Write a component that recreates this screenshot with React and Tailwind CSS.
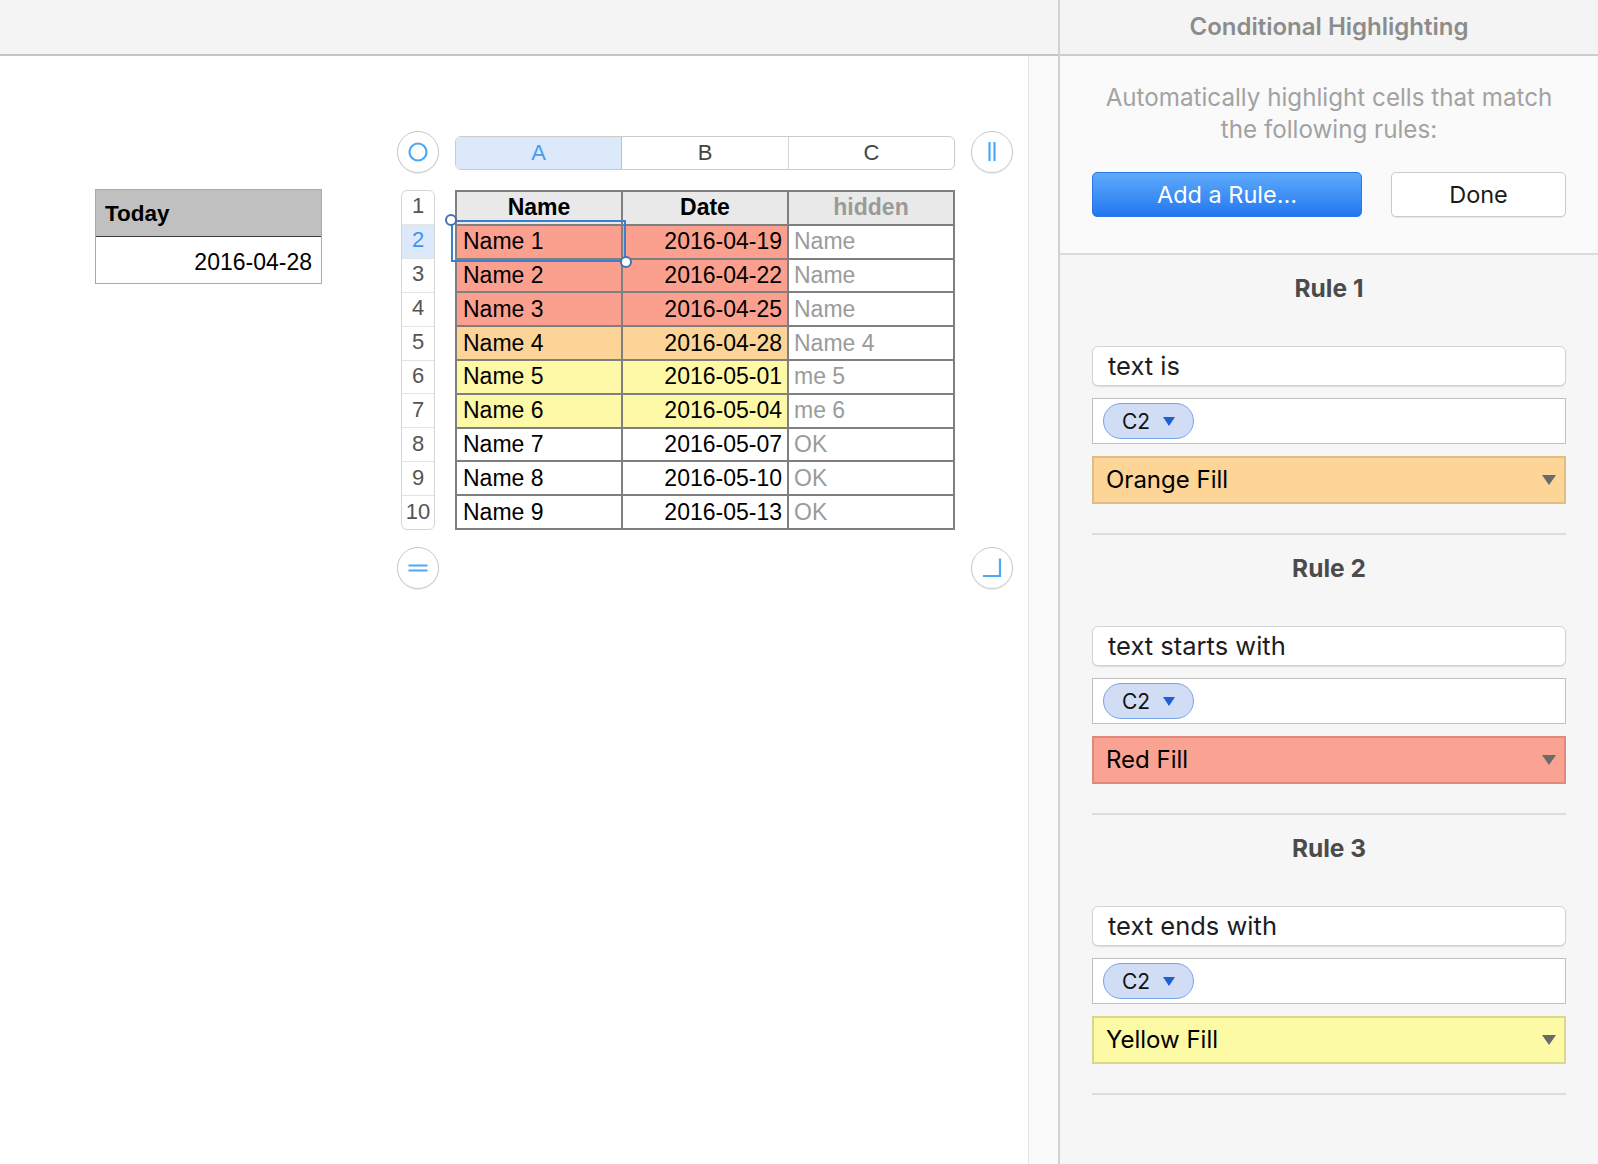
import React from 'react';

/* ---------- data ---------- */
const FILL = { red: 'bg-[#fba08e]', orange: 'bg-[#fcd497]', yellow: 'bg-[#fdf9a6]' };

const ROWS = [
  ['Name 1', '2016-04-19', 'Name', 'red'],
  ['Name 2', '2016-04-22', 'Name', 'red'],
  ['Name 3', '2016-04-25', 'Name', 'red'],
  ['Name 4', '2016-04-28', 'Name 4', 'orange'],
  ['Name 5', '2016-05-01', 'me 5', 'yellow'],
  ['Name 6', '2016-05-04', 'me 6', 'yellow'],
  ['Name 7', '2016-05-07', 'OK', null],
  ['Name 8', '2016-05-10', 'OK', null],
  ['Name 9', '2016-05-13', 'OK', null],
];

const RULES = [
  { title: 'Rule 1', cond: 'text is', fill: 'Orange Fill', cls: 'bg-[#fcd597] border-[#dfbd84]' },
  { title: 'Rule 2', cond: 'text starts with', fill: 'Red Fill', cls: 'bg-[#fba393] border-[#e0887a]' },
  { title: 'Rule 3', cond: 'text ends with', fill: 'Yellow Fill', cls: 'bg-[#fdfaa6] border-[#dcd68a]' },
];

/* ---------- small pieces ---------- */
const CircleBtn = ({ children }) => (
  <div className="w-[42px] h-[42px] rounded-full bg-white border-[1.5px] border-[#cacaca] shadow-[0_1px_1px_rgba(0,0,0,0.08)] flex items-center justify-center">
    <svg width="24" height="24" viewBox="0 0 24 24" fill="none" stroke="#4ea8f6" strokeWidth="2.2">
      {children}
    </svg>
  </div>
);

const SheetTable = () => (
  <div className="relative w-[500px] h-[340px]">
    <div className="w-full h-full grid grid-cols-3 grid-rows-[repeat(10,1fr)] gap-[2px] p-[2px] bg-[#7f7f7f] text-[23px] leading-none">
      <div className="bg-[#e9e9e9] flex items-center justify-center font-bold text-black">Name</div>
      <div className="bg-[#e9e9e9] flex items-center justify-center font-bold text-black">Date</div>
      <div className="bg-[#e9e9e9] flex items-center justify-center font-bold text-[#9a9a9a]">hidden</div>
      {ROWS.map(([name, date, hidden, fill]) => (
        <React.Fragment key={name}>
          <div className={`${fill ? FILL[fill] : 'bg-white'} flex items-center pl-[6px] text-black`}>{name}</div>
          <div className={`${fill ? FILL[fill] : 'bg-white'} flex items-center justify-end pr-[5px] text-black`}>{date}</div>
          <div className="bg-white flex items-center pl-[5px] text-[#9b9b9b]">{hidden}</div>
        </React.Fragment>
      ))}
    </div>
    {/* selection on A2 */}
    <div className="absolute left-[-4px] top-[30px] w-[175px] h-[42px] border-2 border-[#3a7fd0]" />
    <div className="absolute left-[-10px] top-[24px] w-[12px] h-[12px] rounded-full bg-white border-2 border-[#4571b0]" />
    <div className="absolute left-[165px] top-[66px] w-[12px] h-[12px] rounded-full bg-white border-2 border-[#4571b0]" />
  </div>
);

const RowNumbers = () => (
  <div className="mx-auto w-[34px] h-[340px] rounded-[6px] border border-[#d6d6d6] bg-white overflow-hidden flex flex-col">
    {Array.from({ length: 10 }, (_, i) => i + 1).map((n) => (
      <div
        key={n}
        className={`flex-1 flex items-center justify-center pb-[2px] text-[22px] leading-none border-b border-[#e4e4e4] last:border-b-0 ${n === 2 ? 'bg-[#dce9fb] text-[#3d95ee]' : 'text-[#555]'}`}
      >
        {n}
      </div>
    ))}
  </div>
);

const RuleBlock = ({ rule }) => (
  <div className="pt-[18px] pb-[29px] border-b-2 border-[#dddddd]">
    <div className="h-[30px] flex items-center justify-center text-[24.5px] font-bold text-[#4b4b4b]">{rule.title}</div>
    <div className="mt-[43px] h-[40px] rounded-[6px] bg-white border border-[#d3d3d3] shadow-[0_1px_1px_rgba(0,0,0,0.12)] flex items-center pl-[15px] text-[25.5px] text-[#1d1d1d]">
      {rule.cond}
    </div>
    <div className="mt-3 h-[46px] bg-white border border-[#bfbfbf] flex items-center pl-[10px]">
      <div className="h-[36px] w-[91px] rounded-full bg-[#d0ddf5] border-[1.5px] border-[#7aa4ea] flex items-center pl-[18px] gap-[13px]">
        <span className="text-[21px] text-[#111] leading-none">C2</span>
        <svg width="12" height="9" viewBox="0 0 12 9"><path d="M0 0 H12 L6 9 Z" fill="#1f5fd4" /></svg>
      </div>
    </div>
    <div className={`mt-3 h-[48px] border-2 ${rule.cls} flex items-center justify-between pl-[12px] pr-[8px]`}>
      <span className="text-[24px] text-black">{rule.fill}</span>
      <svg width="14" height="10" viewBox="0 0 14 10"><path d="M0 0 H14 L7 10 Z" fill="#6a6a6a" /></svg>
    </div>
  </div>
);

/* ---------- page ---------- */
export default function App() {
  return (
    <div className="w-[1598px] h-[1164px] flex overflow-hidden bg-white font-['Liberation_Sans',Arial,sans-serif]">
      {/* left: sheet canvas */}
      <div className="w-[1058px] h-full flex flex-col">
        <div className="h-[56px] bg-[#f4f4f4] border-b-2 border-[#c4c4c4]" />
        <div className="flex-1 flex">
          <div className="w-[1028px] flex items-start">
            {/* Today table */}
            <div className="ml-[95px] mt-[133px] w-[227px] border border-[#a9a9a9]">
              <div className="h-[47px] bg-[#bfc0bf] border-b border-[#3c3c3c] flex items-center pl-[9px] pt-[2px] text-[22.5px] font-bold text-black">Today</div>
              <div className="h-[46px] bg-white flex items-center justify-end pr-[9px] pt-[4px] text-[23px] text-black">2016-04-28</div>
            </div>

            {/* spreadsheet */}
            <div className="ml-[75px] mt-[75px] grid grid-cols-[42px_500px_42px] grid-rows-[42px_340px_42px] gap-x-[16px] gap-y-[17px]">
              <CircleBtn><circle cx="12" cy="12" r="8.5" /></CircleBtn>
              <div className="self-center mt-[2px] h-[34px] flex rounded-[6px] border border-[#cbcbcb] overflow-hidden bg-white text-[22px] leading-none">
                <div className="flex-1 flex items-center justify-center bg-[#dbe9fb] text-[#4b9bf0] border-r border-[#aac3e3]">A</div>
                <div className="flex-1 flex items-center justify-center text-[#444] border-r border-[#d6d6d6]">B</div>
                <div className="flex-1 flex items-center justify-center text-[#444]">C</div>
              </div>
              <CircleBtn><path d="M9.5 2 V21 M14.5 2 V21" /></CircleBtn>

              <RowNumbers />
              <SheetTable />
              <div />

              <CircleBtn><path d="M2.5 9.5 H21.5 M2.5 14.5 H21.5" /></CircleBtn>
              <div />
              <CircleBtn><path d="M20 2.5 V20 H3" /></CircleBtn>
            </div>
          </div>
          {/* scroll track */}
          <div className="w-[30px] bg-[#fafafa] border-l border-[#e2e2e2]" />
        </div>
      </div>

      {/* right: inspector panel */}
      <div className="w-[540px] h-full bg-[#f6f6f6] border-l-2 border-[#d2d2d2] flex flex-col font-['Inter',sans-serif]">
        <div className="h-[56px] bg-[#f4f4f4] border-b-2 border-[#cdcdcd] flex items-center justify-center text-[24px] font-semibold text-[#8c8c8c]">
          Conditional Highlighting
        </div>
        <div className="h-[199px] bg-[#fafafa] border-b-2 border-[#dcdcdc] px-8 pt-[26px]">
          <p className="text-center text-[24.2px] leading-[32px] text-[#a2a2a2]">
            Automatically highlight cells that match<br />the following rules:
          </p>
          <div className="mt-[26px] flex justify-between">
            <div className="w-[270px] h-[45px] rounded-[5px] bg-gradient-to-b from-[#5eaafa] to-[#2277f0] border border-[#2a78e6] flex items-center justify-center text-[23.5px] text-white">
              Add a Rule…
            </div>
            <div className="w-[175px] h-[45px] rounded-[5px] bg-white border border-[#cbcbcb] shadow-[0_1px_1px_rgba(0,0,0,0.08)] flex items-center justify-center text-[23.5px] text-[#1a1a1a]">
              Done
            </div>
          </div>
        </div>
        <div className="px-8">
          {RULES.map((r) => (
            <RuleBlock key={r.title} rule={r} />
          ))}
        </div>
      </div>
    </div>
  );
}
